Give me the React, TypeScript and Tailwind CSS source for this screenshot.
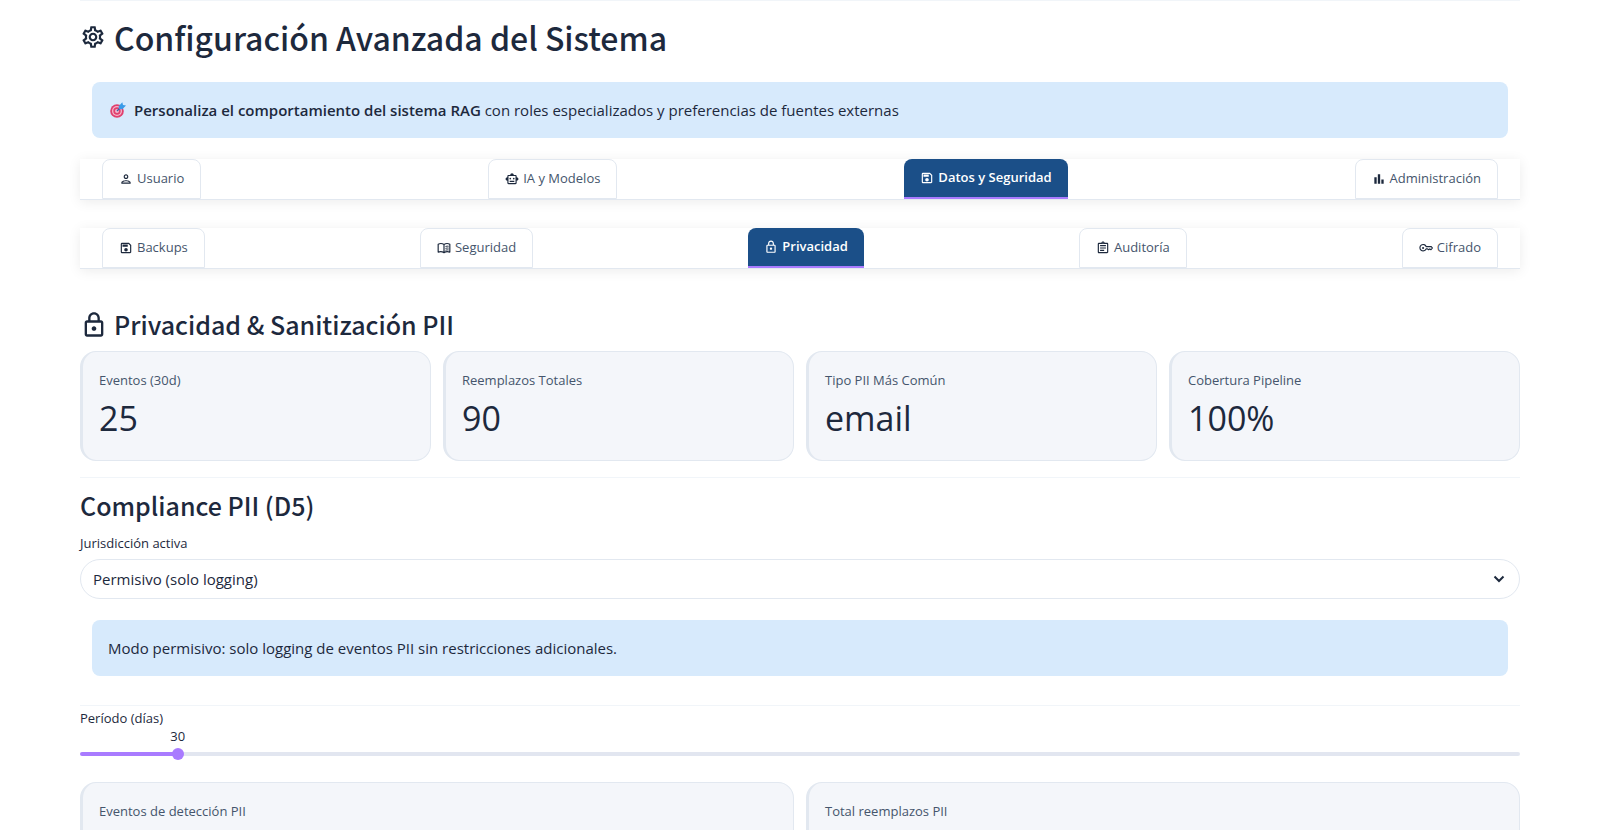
import { useState } from "react";
import type { ComponentType, ReactNode } from "react";
import {
  MdBarChart,
  MdOutlineAssignment,
  MdOutlineLock,
  MdOutlinePerson,
  MdOutlineSave,
  MdOutlineSettings,
  MdOutlineSmartToy,
} from "react-icons/md";

interface Tab {
  id: string;
  label: string;
  icon: ComponentType<{ className?: string }>;
}

function BookIcon({ className }: { className?: string }) {
  return (
    <svg
      className={className}
      viewBox="0 0 24 24"
      fill="none"
      stroke="currentColor"
      strokeWidth="2"
      strokeLinejoin="round"
      aria-hidden="true"
    >
      <path d="M12 20c-3-2-7-2-10-1V5.500c3-1.500 7-1.500 10 .5 3-2 7-2 10-.5V19c-3-1-7-1-10 1zM12 6v14" />
      <path d="M14.500 9.500c2-.8 3.500-.8 5.500-.5M14.500 12.700c2-.8 3.500-.8 5.500-.5M14.500 15.900c2-.8 3.500-.8 5.500-.5" strokeWidth="1.6" />
    </svg>
  );
}

function KeyIcon({ className }: { className?: string }) {
  return (
    <svg
      className={className}
      viewBox="0 0 24 24"
      fill="none"
      stroke="currentColor"
      strokeWidth="2"
      strokeLinejoin="round"
      aria-hidden="true"
    >
      <path d="M12.200 9.500H21l2 2.500-2.500 3-2-1.500-2 1.500-2-1.500h-2.300a5.500 5.500 0 1 1 0-4z" />
      <circle cx="7" cy="12" r="1.800" fill="currentColor" stroke="none" />
    </svg>
  );
}

const MAIN_TABS: Tab[] = [
  { id: "usuario", label: "Usuario", icon: MdOutlinePerson },
  { id: "ia", label: "IA y Modelos", icon: MdOutlineSmartToy },
  { id: "datos", label: "Datos y Seguridad", icon: MdOutlineSave },
  { id: "admin", label: "Administración", icon: MdBarChart },
];

const DATA_TABS: Tab[] = [
  { id: "backups", label: "Backups", icon: MdOutlineSave },
  { id: "seguridad", label: "Seguridad", icon: BookIcon },
  { id: "privacidad", label: "Privacidad", icon: MdOutlineLock },
  { id: "auditoria", label: "Auditoría", icon: MdOutlineAssignment },
  { id: "cifrado", label: "Cifrado", icon: KeyIcon },
];

const MIN_DAYS = 7;
const MAX_DAYS = 365;

function TargetIcon() {
  return (
    <svg className="ml-0.5 size-4 shrink-0" viewBox="0 0 16 16" aria-hidden="true">
      <circle cx="7" cy="9" r="6.8" fill="#e0406e" />
      <circle cx="7" cy="9" r="5" fill="#f3b6cb" />
      <circle cx="7" cy="9" r="3.7" fill="#e0406e" />
      <circle cx="7" cy="9" r="2" fill="#f3b6cb" />
      <path d="M7 9 12 4" stroke="#3b5fa6" strokeWidth="1.2" />
      <path d="M8.700 4.200 12.300.2l.7 2.700 3 .7-3.700 3.700-3.200-.3z" fill="#3a9be8" />
    </svg>
  );
}

function Tabs({ name, tabs, initial }: { name: string; tabs: Tab[]; initial: string }) {
  const [active, setActive] = useState(initial);

  return (
    <div
      role="tablist"
      aria-label={name}
      className="flex h-[41px] justify-between border-b border-slate-200 bg-white px-[22px] shadow-[0_2px_12px_rgba(0,0,0,0.08)]"
    >
      {tabs.map(({ id, label, icon: Icon }) => {
        const selected = id === active;
        return (
          <button
            key={id}
            type="button"
            role="tab"
            aria-selected={selected}
            onClick={() => setActive(id)}
            className={`flex items-center gap-1 rounded-t-lg px-4 text-[13px] ${
              selected
                ? "border-b-2 border-[#a97bff] bg-[#1b4f88] font-semibold text-white"
                : "border border-slate-200 bg-white text-slate-600"
            }`}
          >
            <Icon className={`size-[14px] ${selected ? "text-white" : "text-slate-800"}`} />
            {label}
          </button>
        );
      })}
    </div>
  );
}

function InfoBox({ children }: { children: ReactNode }) {
  return (
    <div className="mx-3 flex h-14 items-center gap-2 rounded-lg bg-[#d7eafc] px-4 text-[15px]">
      {children}
    </div>
  );
}

function Metric({ label, value }: { label: string; value?: string }) {
  return (
    <div className="min-h-[110px] rounded-2xl border border-l-[3px] border-slate-200 bg-[#f4f6fa] px-4 pt-4">
      <div className="text-[13px] leading-6 text-slate-600">{label}</div>
      {value && <div className="mt-0.5 text-[34px] leading-12">{value}</div>}
    </div>
  );
}

const headingFont = "font-['Noto_Sans_CJK_SC',sans-serif] font-medium";

export default function App() {
  const [jurisdiction, setJurisdiction] = useState("permisivo");
  const [days, setDays] = useState(30);
  const ratio = (days - MIN_DAYS) / (MAX_DAYS - MIN_DAYS);
  // Centre of the 12px thumb
  const thumbX = `calc(6px + (100% - 12px) * ${ratio})`;

  return (
    <main className="h-screen overflow-y-auto bg-white px-20 font-['Open_Sans',sans-serif] text-slate-800 [scrollbar-width:none]">
      <hr className="border-slate-100" />

      <h1 className={`mt-3 flex h-12 items-center gap-2 text-[32px] ${headingFont}`}>
        <MdOutlineSettings className="size-[26px]" />
        Configuración Avanzada del Sistema
      </h1>

      <div className="mt-[21px]">
        <InfoBox>
          <TargetIcon />
          <p>
            <strong className="font-semibold">Personaliza el comportamiento del sistema RAG</strong>{" "}
            con roles especializados y preferencias de fuentes externas
          </p>
        </InfoBox>
      </div>

      <div className="mt-[21px] flex flex-col gap-7">
        <Tabs name="Configuración" tabs={MAIN_TABS} initial="datos" />
        <Tabs name="Datos y Seguridad" tabs={DATA_TABS} initial="privacidad" />
      </div>

      <h2 className={`mt-[38px] flex h-9 items-center gap-1.5 text-[25px] ${headingFont}`}>
        <MdOutlineLock className="size-7" />
        Privacidad &amp; Sanitización PII
      </h2>

      <div className="mt-2 grid grid-cols-4 gap-3">
        <Metric label="Eventos (30d)" value="25" />
        <Metric label="Reemplazos Totales" value="90" />
        <Metric label="Tipo PII Más Común" value="email" />
        <Metric label="Cobertura Pipeline" value="100%" />
      </div>

      <hr className="mt-4 border-slate-100" />

      <h2 className={`mt-2.5 flex h-9 items-center text-[25px] ${headingFont}`}>
        Compliance PII (D5)
      </h2>

      <label htmlFor="jurisdiction" className="mt-[7px] block text-[13px] leading-6">
        Jurisdicción activa
      </label>
      <div className="relative mt-1">
        <select
          id="jurisdiction"
          value={jurisdiction}
          onChange={(e) => setJurisdiction(e.target.value)}
          className="h-10 w-full appearance-none rounded-full border border-slate-200 bg-white px-3 text-[15px]"
        >
          <option value="permisivo">Permisivo (solo logging)</option>
          <option value="gdpr">GDPR</option>
        </select>
        <svg
          className="pointer-events-none absolute top-3 right-3 size-4"
          viewBox="0 0 16 16"
          fill="none"
          stroke="currentColor"
          strokeWidth="2"
          aria-hidden="true"
        >
          <path d="M2.500 5.500 7 10l4.500-4.500" />
        </svg>
      </div>

      <div className="mt-[21px]">
        <InfoBox>Modo permisivo: solo logging de eventos PII sin restricciones adicionales.</InfoBox>
      </div>

      <hr className="mt-[29px] border-slate-100" />

      <label htmlFor="days" className="block text-[13px] leading-6">
        Período (días)
      </label>
      <div className="text-[13px] leading-3">
        <output htmlFor="days" className="inline-block -translate-x-1/2" style={{ marginLeft: thumbX }}>
          {days}
        </output>
      </div>
      <input
        id="days"
        type="range"
        min={MIN_DAYS}
        max={MAX_DAYS}
        value={days}
        onChange={(e) => setDays(Number(e.target.value))}
        className="mt-2.5 block h-1 w-full appearance-none rounded-full [&::-webkit-slider-thumb]:size-3 [&::-webkit-slider-thumb]:appearance-none [&::-webkit-slider-thumb]:rounded-full [&::-webkit-slider-thumb]:bg-[#a97bff]"
        style={{ background: `linear-gradient(to right, #a97bff ${thumbX}, #e2e6f0 ${thumbX})` }}
      />

      <div className="mt-[26px] grid grid-cols-2 gap-3">
        <Metric label="Eventos de detección PII" />
        <Metric label="Total reemplazos PII" />
      </div>
    </main>
  );
}
